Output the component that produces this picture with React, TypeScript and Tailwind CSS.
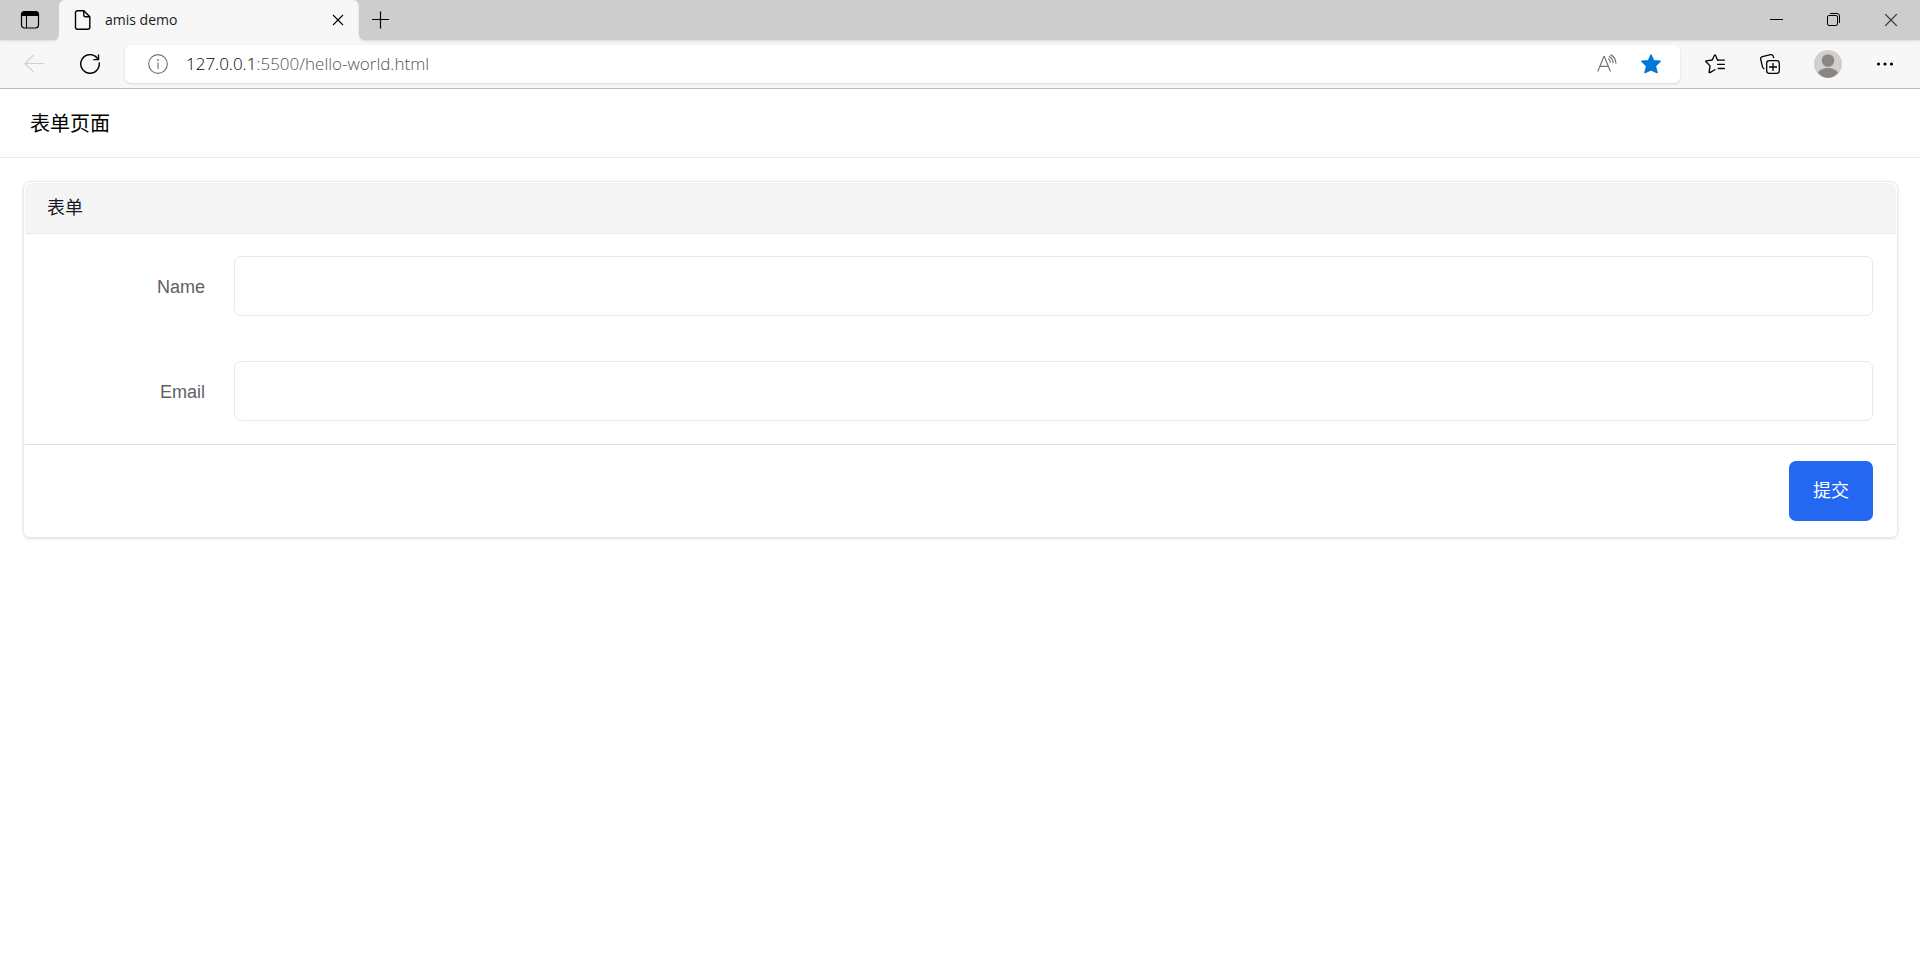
import React from 'react';

interface IconProps {
  className?: string;
}

const TabActionsIcon: React.FC<IconProps> = ({ className }) => (
  <svg viewBox="0 0 20 20" className={className} fill="none" stroke="currentColor">
    <rect x="1.5" y="1.5" width="17" height="16.5" rx="3" strokeWidth="1.2" />
    <path d="M1.5 5.5V4.5a3 3 0 0 1 3-3h11a3 3 0 0 1 3 3v1z" fill="currentColor" />
    <path d="M6.5 5.5V18" />
  </svg>
);

const FileIcon: React.FC<IconProps> = ({ className }) => (
  <svg viewBox="0 0 20 20" className={className} fill="none" stroke="currentColor" strokeWidth="1.4" strokeLinejoin="round">
    <path d="M4.5.7h6.3l6 6V17.3a2 2 0 0 1-2 2H4.5a2 2 0 0 1-2-2V2.7a2 2 0 0 1 2-2z" />
    <path d="M10.8.7V5.2a1.5 1.5 0 0 0 1.5 1.5h4.5" />
  </svg>
);

const CrossIcon: React.FC<IconProps> = ({ className }) => (
  <svg viewBox="0 0 12 12" className={className} fill="none" stroke="currentColor" strokeWidth="1.1">
    <path d="M1 1l10 10M11 1L1 11" />
  </svg>
);

const PlusIcon: React.FC<IconProps> = ({ className }) => (
  <svg viewBox="0 0 18 18" className={className} fill="none" stroke="currentColor" strokeWidth="1.2">
    <path d="M8.5.5v17M0 8.500h17" />
  </svg>
);

const MinimizeIcon: React.FC<IconProps> = ({ className }) => (
  <svg viewBox="0 0 14 14" className={className} stroke="currentColor">
    <path d="M0 6.5h13" />
  </svg>
);

const RestoreIcon: React.FC<IconProps> = ({ className }) => (
  <svg viewBox="0 0 14 14" className={className} fill="none" stroke="currentColor">
    <rect x=".5" y="2.5" width="10" height="10" rx="1.5" />
    <path d="M3 .5h7a2.500 2.500 0 0 1 2.500 2.500V10" />
  </svg>
);

const BackIcon: React.FC<IconProps> = ({ className }) => (
  <svg viewBox="0 0 20 20" className={className} fill="none" stroke="currentColor" strokeWidth="1.2">
    <path d="M20 9.5H1M9.7.8L1 9.5l8.7 8.7" />
  </svg>
);

const RefreshIcon: React.FC<IconProps> = ({ className }) => (
  <svg viewBox="0 0 20 20" className={className} fill="none" stroke="currentColor" strokeWidth="1.4">
    <path d="M19.200 8.300A9.300 9.300 0 1 1 15.500 2.400l2.800 2.800" />
    <path d="M18.500.4v5.200h-5.200" />
  </svg>
);

const InfoIcon: React.FC<IconProps> = ({ className }) => (
  <svg viewBox="0 0 20 20" className={className} fill="none" stroke="currentColor" strokeWidth="1.2">
    <circle cx="10" cy="10" r="9.3" />
    <path d="M10 8.5V15" />
    <circle cx="10" cy="6" r=".9" fill="currentColor" stroke="none" />
  </svg>
);

const ReadAloudIcon: React.FC<IconProps> = ({ className }) => (
  <svg viewBox="0 0 20 20" className={className} fill="none" stroke="currentColor" strokeWidth="1.2">
    <path d="M.8 17.5L6.8 2.600h.6l6 14.900M2.800 12.400h8.600" />
    <path d="M11.200 4.600c1.300.9 2 2.300 2.200 4.200M11.900 2.300c2.500 1.400 4 3.700 4.200 6.900M13.400.6c3.500 1.700 5.400 4.800 5.600 9" />
  </svg>
);

const StarIcon: React.FC<IconProps> = ({ className }) => (
  <svg viewBox="0 0 20 20" className={className} fill="currentColor" stroke="currentColor" strokeWidth="1.4" strokeLinejoin="round">
    <path d="M10 1l2.600 5.800 6.600.4-4.900 4.800 1.800 6.600-6.100-2.700-6.100 2.700L5.700 12 .8 7.200l6.600-.4z" />
  </svg>
);

const FavoritesIcon: React.FC<IconProps> = ({ className }) => (
  <svg viewBox="0 0 20 20" className={className} fill="none" stroke="currentColor" strokeWidth="1.3" strokeLinecap="round" strokeLinejoin="round">
    <path d="M13.200 6.200q-.6 0-.8-.5L10.500 1.300q-.5-.9-1 0L7.200 6 1.300 6.900q-.9.2-.3.900l4.100 4.100-1 6.200q0 .9.800.5l5-2.800" />
    <path d="M13.200 6.200h6.200M12.600 10.300h6.800M13.200 14.500h6.200" />
  </svg>
);

const CollectionsIcon: React.FC<IconProps> = ({ className }) => (
  <svg viewBox="0 0 20 20" className={className} fill="none" stroke="currentColor" strokeWidth="1.3">
    <rect x="6.700" y="6.700" width="12.600" height="12.600" rx="2.500" />
    <path d="M13 9v8M9 13h8" />
    <path d="M4.500 14.800a2.500 2.500 0 0 1-2-1.900L.7 5.400a2.300 2.300 0 0 1 1.700-2.800L10.500.700a2.300 2.300 0 0 1 2.800 1.700l.5 1.800" />
  </svg>
);

const AvatarIcon: React.FC<IconProps> = ({ className }) => (
  <svg viewBox="0 0 28 28" className={className}>
    <circle cx="14" cy="14" r="14" fill="#d2d0ce" />
    <circle cx="14" cy="10.500" r="6.300" fill="#8a8684" />
    <path d="M3.900 22.800C5.600 20 9.700 18.100 14 18.100s8.400 1.900 10.100 4.700A14 14 0 0 1 14 28a14 14 0 0 1-10.100-5.200z" fill="#8a8684" />
  </svg>
);

const MoreIcon: React.FC<IconProps> = ({ className }) => (
  <svg viewBox="0 0 18 18" className={className} fill="currentColor">
    <circle cx="2.500" cy="9" r="1.600" />
    <circle cx="9" cy="9" r="1.600" />
    <circle cx="15.500" cy="9" r="1.600" />
  </svg>
);

const TabStrip: React.FC = () => (
  <div className="flex h-10">
    <div className="flex w-[59px] items-center justify-center rounded-br-md bg-[#cdcdcd] shadow">
      <button type="button" aria-label="Tab actions">
        <TabActionsIcon className="size-5" />
      </button>
    </div>
    <div className="w-[300px] bg-[#cdcdcd]">
      <div className="flex h-full items-center rounded-t-md bg-[#f7f7f7] pr-[15px] pl-3.5">
        <FileIcon className="size-5" />
        <span className="ml-3 flex-1 text-sm text-[#1b1b1b]">amis demo</span>
        <button type="button" aria-label="Close tab">
          <CrossIcon className="size-3" />
        </button>
      </div>
    </div>
    <div className="flex flex-1 items-center rounded-bl-md bg-[#cdcdcd] pr-[22px] pl-[13px] shadow">
      <button type="button" aria-label="New tab">
        <PlusIcon className="size-[18px]" />
      </button>
      <div className="ml-auto flex gap-[43px]">
        <button type="button" aria-label="Minimize">
          <MinimizeIcon className="size-3.5" />
        </button>
        <button type="button" aria-label="Restore">
          <RestoreIcon className="size-3.5" />
        </button>
        <button type="button" aria-label="Close">
          <CrossIcon className="size-3.5 text-[#333]" />
        </button>
      </div>
    </div>
  </div>
);

const Toolbar: React.FC = () => (
  <div className="flex h-[49px] items-center border-b border-[#b9b9b9] pr-[26px] pl-6">
    <button type="button" aria-label="Back" disabled className="text-[#cfcfcf]">
      <BackIcon className="size-5" />
    </button>
    <button type="button" aria-label="Refresh" className="ml-9">
      <RefreshIcon className="size-5" />
    </button>
    <div className="ml-[25px] flex h-[38px] flex-1 items-center rounded-md bg-white pr-[19px] pl-[23px] shadow-sm">
      <InfoIcon className="size-5 text-[#767676]" />
      <div className="ml-[18px] flex-1 text-[17px] font-light text-[#555]">
        <span className="text-black">127.0.0.1</span>:5500/hello-world.html
      </div>
      <button type="button" aria-label="Read aloud" className="text-[#767676]">
        <ReadAloudIcon className="size-5" />
      </button>
      <button type="button" aria-label="Favorite" className="ml-6 text-[#0078d7]">
        <StarIcon className="size-5" />
      </button>
    </div>
    <div className="ml-[25px] flex items-center">
      <button type="button" aria-label="Favorites">
        <FavoritesIcon className="size-5" />
      </button>
      <button type="button" aria-label="Collections" className="ml-[35px]">
        <CollectionsIcon className="size-5" />
      </button>
      <button type="button" aria-label="Profile" className="ml-[34px]">
        <AvatarIcon className="size-7" />
      </button>
      <button type="button" aria-label="More" className="ml-[34px]">
        <MoreIcon className="size-[18px]" />
      </button>
    </div>
  </div>
);

interface FieldProps {
  label: string;
  name: string;
  type: string;
}

const Field: React.FC<FieldProps> = ({ label, name, type }) => (
  <div className="flex items-center">
    <label htmlFor={name} className="w-[180px] pt-0.5 text-right text-lg text-[#5e5f66]">
      {label}
    </label>
    <input
      id={name}
      name={name}
      type={type}
      className="ml-[29px] h-[60px] min-w-0 flex-1 rounded-[7px] border border-[#e8e9eb] px-4 text-lg outline-none"
    />
  </div>
);

const fields: FieldProps[] = [
  { label: 'Name', name: 'name', type: 'text' },
  { label: 'Email', name: 'email', type: 'email' },
];

const App: React.FC = () => {
  return (
    <div className="min-h-screen bg-white">
      <header className="bg-[#f7f7f7] font-['Open_Sans','Noto_Sans',sans-serif] text-black [&_button]:block">
        <TabStrip />
        <Toolbar />
      </header>

      <main className="font-['Liberation_Sans','Noto_Sans_CJK_SC',sans-serif]">
        <div className="flex h-[69px] items-center border-b border-[#e8e9eb] px-[30px] pt-0.5">
          <h1 className="text-xl text-black">表单页面</h1>
        </div>

        <form
          className="mt-[23px] mr-[22px] ml-[23px] rounded-[7px] border border-[#e8e9eb] p-px shadow-sm"
          onSubmit={(e) => e.preventDefault()}
        >
          <div className="flex h-[51px] items-center rounded-t-md border-b border-[#e8e9eb] bg-[#f4f4f4] px-[22px]">
            <h2 className="text-lg text-[#151b26]">表单</h2>
          </div>
          <div className="flex flex-col gap-[45px] pt-[22px] pr-[23px] pb-[23px]">
            {fields.map((field) => (
              <Field key={field.name} {...field} />
            ))}
          </div>
          <div className="flex justify-end border-t border-[#dfe1e5] pt-4 pr-[23px] pb-[15px]">
            <button type="submit" className="h-[60px] rounded-[7px] bg-[#2468f2] px-6 text-lg text-white">
              提交
            </button>
          </div>
        </form>
      </main>
    </div>
  );
};

export default App;
